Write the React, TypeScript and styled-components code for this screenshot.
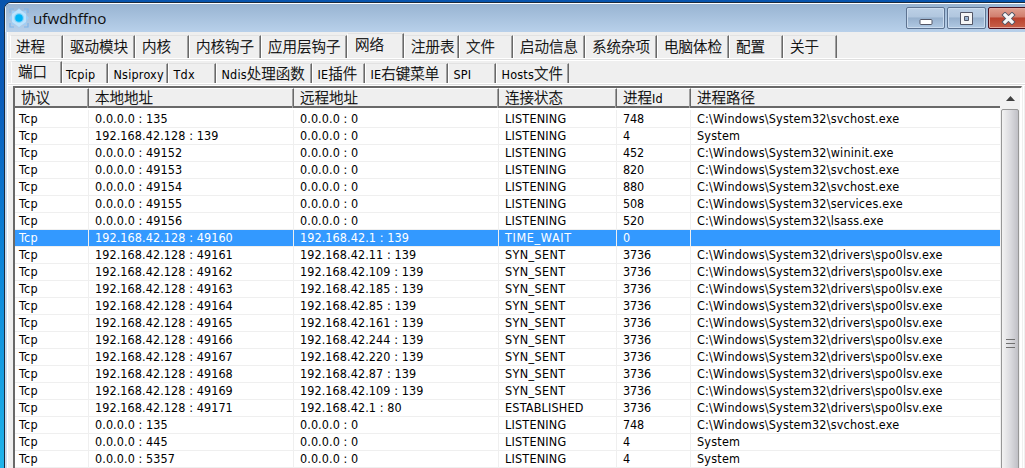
import React from 'react';
import styled, { createGlobalStyle, css } from 'styled-components';

const Global = createGlobalStyle`
  * { box-sizing: border-box; }
  body { margin: 0; overflow: hidden; font-family: "DejaVu Sans Condensed", "Noto Sans CJK SC", sans-serif; font-size: 12px; color: #000; }
`;

const Desktop = styled.div`
  width: 1025px; height: 468px; overflow: hidden;
  padding: 2px 0 0 4px;
  background: linear-gradient(180deg, #0754ad 0%, #0a5cba 20%, #0c84d8 55%, #1fb4ea 100%);
`;
const Window = styled.div`
  width: 1040px; height: 490px;
  border: 1px solid #1c2a3a; border-radius: 7px 0 0 0;
  background: #c9dcf0; overflow: hidden;
  display: flex; flex-direction: column;
`;
const TitleBar = styled.div`
  height: 29px; flex: none; padding: 0 0 0 3px;
  border-top: 1px solid #fff;
  border-left: 1px solid #e6f1fb;
  background: linear-gradient(180deg, #98b4d2, #b8d0ea);
  display: flex; align-items: center;
`;
const Title = styled.div`
  font: 15.2px "Open Sans", sans-serif; line-height: 22px; margin-left: 4px; width: 873px; color: #101010;
`;
const CaptionButton = styled.div<{ $close?: boolean }>`
  width: ${p => (p.$close ? 41 : 39)}px; height: 22px; margin-right: 2px; flex: none;
  display: flex; align-items: center; justify-content: center;
  border-radius: 2px; border: 1px solid ${p => (p.$close ? '#4b1020' : '#5d7391')};
  box-shadow: inset 0 0 0 1px ${p => (p.$close ? '#e5a79c' : '#cbdcef')};
  background: ${p => p.$close
    ? 'linear-gradient(180deg, #e0a090 0%, #d07c6c 47%, #b8402c 48%, #c8604a 100%)'
    : 'linear-gradient(180deg, #bcd0e6 0%, #b0c6de 47%, #96b0cd 48%, #b0c9e3 100%)'};
`;
const Body = styled.div`
  flex: 1; display: flex; flex-direction: column; margin-left: 2px; border-left: 1px solid #fff;
  background: #efefef;
`;
const TabRow = styled.div<{ $sub?: boolean }>`
  flex: none; display: flex; align-items: flex-end;
  height: ${p => (p.$sub ? 22 : 26)}px;
  padding-left: ${p => (p.$sub ? 3 : 2)}px;
`;
const cjkText = css`
  font-size: 14.5px; font-weight: 300; -webkit-text-stroke: 0.25px #000;
`;
const Tab = styled.div<{ $w: number; $active?: boolean; $sub?: boolean }>`
  width: ${p => p.$w}px; flex: none; white-space: nowrap;
  height: ${p => (p.$sub ? 20 : 23)}px;
  line-height: ${p => (p.$sub ? 20 : 22)}px;
  padding-left: ${p => (p.$sub ? 4.5 : 6)}px;
  ${cjkText}
  border-left: 1px solid #fff; border-top: 1px solid #e2e2e2;
  border-right: 1px solid #696969; box-shadow: inset -1px 0 0 #a0a0a0;
  &:first-child { padding-left: 5px; }
  ${p => p.$sub && css`&:nth-child(2) { padding-left: 3px; }`}
  ${p => p.$active && css`
    height: ${p.$sub ? 22 : 25}px;
    padding-left: 7px;
    &:first-child { padding-left: 6px; }
  `}
`;
const Latin = styled.span`
  font-size: 12.5px; letter-spacing: 0.2px; font-weight: 400; -webkit-text-stroke: 0;
`;
const Rule = styled.div`
  height: 3px; flex: none; border-top: 1px solid #fff; border-bottom: 1px solid #fff; background: #dfdfdf;
`;
const Workspace = styled.div`
  flex: 1; display: flex; padding-left: 5px;
`;
const Pane = styled.div`
  width: 1009px; display: flex; flex: none;
  border: 2px solid #696969; border-right: 1px solid #fff; background: #fff;
`;
const Edge = styled.div`
  width: 3px; margin-left: 1px; border-left: 1px solid #fff; border-right: 1px solid #8a8a8a;
`;
const Table = styled.div`
  width: 985px; flex: none;
`;
const Line = styled.div`
  display: grid; grid-template-columns: 74px 205px 205px 118px 74px 1fr;
`;
const Header = styled(Line)`
  height: 20px; background: #efefef; border-bottom: 2px solid #696969; margin-bottom: 2px;
`;
const HeadCell = styled.div`
  padding-left: 6px; ${cjkText} line-height: 18px; white-space: nowrap;
  border-top: 1px solid #fff;
  border-right: 1px solid #696969; box-shadow: inset -1px 0 0 #a0a0a0;
  &:last-child { border-right: 0; box-shadow: none; }
`;
const Row = styled(Line)<{ $selected?: boolean }>`
  height: 17px;
  ${p => p.$selected && css`
    color: #fff;
    background: repeating-linear-gradient(90deg, #a07040 0 1px, #3399ff 1px 2px) 0 0 / 100% 1px no-repeat #3399ff;
  `}
`;
const Cell = styled.div<{ $track?: number }>`
  padding-left: 6px; line-height: 17px; white-space: pre; font-size: 12.5px;
  letter-spacing: ${p => p.$track ?? 0}px;
  border-right: 1px solid #efefef; border-bottom: 1px solid #efefef;
  &:first-child { padding-left: 4px; }
  &:last-child { border-right: 0; }
`;
const Scroll = styled.div`
  width: 20px; background: #f2f2f2; display: flex; flex-direction: column; align-items: center;
`;
const Arrow = styled.div`
  height: 21px; display: flex; align-items: center;
`;
const Thumb = styled.div`
  width: 18px; height: 468px; flex: none; border: 1px solid #979797; border-radius: 2px;
  background: linear-gradient(90deg, #f3f3f3, #dcdce0 50%, #c0c0c6);
  display: flex; align-items: center; justify-content: center;
`;

type TabDef = [string, number];
const mainTabs: TabDef[] = [['进程', 53], ['驱动模块', 72], ['内核', 54], ['内核钩子', 72], ['应用层钩子', 86], ['网络', 57], ['注册表', 55], ['文件', 54], ['启动信息', 72], ['系统杂项', 72], ['电脑体检', 72], ['配置', 54], ['关于', 54]];
const subTabs: TabDef[] = [['端口', 51], ['Tcpip', 46], ['Nsiproxy', 60], ['Tdx', 48], ['Ndis处理函数', 96], ['IE插件', 53], ['IE右键菜单', 83], ['SPI', 48], ['Hosts文件', 73]];
const heads = ['协议', '本地地址', '远程地址', '连接状态', '进程Id', '进程路径'];
const sys = 'C:\\Windows\\System32\\';
const virus = sys + 'drivers\\spo0lsv.exe';
const L = 'LISTENING';
const S = 'SYN_SENT';
const ip = '192.168.42.';
const rows = [
  ['0.0.0.0 : 135', '0.0.0.0 : 0', L, '748', sys + 'svchost.exe'],
  [ip + '128 : 139', '0.0.0.0 : 0', L, '4', 'System'],
  ['0.0.0.0 : 49152', '0.0.0.0 : 0', L, '452', sys + 'wininit.exe'],
  ['0.0.0.0 : 49153', '0.0.0.0 : 0', L, '820', sys + 'svchost.exe'],
  ['0.0.0.0 : 49154', '0.0.0.0 : 0', L, '880', sys + 'svchost.exe'],
  ['0.0.0.0 : 49155', '0.0.0.0 : 0', L, '508', sys + 'services.exe'],
  ['0.0.0.0 : 49156', '0.0.0.0 : 0', L, '520', sys + 'lsass.exe'],
  [ip + '128 : 49160', ip + '1 : 139', 'TIME_WAIT', '0', ''],
  [ip + '128 : 49161', ip + '11 : 139', S, '3736', virus],
  [ip + '128 : 49162', ip + '109 : 139', S, '3736', virus],
  [ip + '128 : 49163', ip + '185 : 139', S, '3736', virus],
  [ip + '128 : 49164', ip + '85 : 139', S, '3736', virus],
  [ip + '128 : 49165', ip + '161 : 139', S, '3736', virus],
  [ip + '128 : 49166', ip + '244 : 139', S, '3736', virus],
  [ip + '128 : 49167', ip + '220 : 139', S, '3736', virus],
  [ip + '128 : 49168', ip + '87 : 139', S, '3736', virus],
  [ip + '128 : 49169', ip + '109 : 139', S, '3736', virus],
  [ip + '128 : 49171', ip + '1 : 80', 'ESTABLISHED', '3736', virus],
  ['0.0.0.0 : 135', '0.0.0.0 : 0', L, '748', sys + 'svchost.exe'],
  ['0.0.0.0 : 445', '0.0.0.0 : 0', L, '4', 'System'],
  ['0.0.0.0 : 5357', '0.0.0.0 : 0', L, '4', 'System'],
];
const columnTracking = [0.08, 0.08, 0.2, -0.15, 0.21];
const textTracking: Record<string, number> = { TIME_WAIT: 0.65, SYN_SENT: 0.35 };

const Mixed = ({ text }: { text: string }) => (
  <>{text.split(/([A-Za-z]+)/).filter(Boolean).map((t, i) => /[A-Za-z]/.test(t) ? <Latin key={i}>{t}</Latin> : t)}</>
);

const Gear = () => (
  <svg width="20" height="20" viewBox="0 0 20 20">
    <path d="M1 5V1h4M15 1h4v4M19 15v4h-4M5 19H1v-4" fill="none" stroke="#7fb4e8" strokeWidth="1.2" />
    <path d="M10 0l3 3 4-.5.5 4.500L20 10l-2.500 3-.5 4-4-.5-3 3.500-3-3.500-4 .5-.5-4L0 10l2.500-3L3 2.500 7 3z" fill="#9fcef5" />
    <path d="M10 1l7 5v8l-7 5-7-5V6z" fill="#bfe2fb" />
    <circle cx="10" cy="10" r="5" fill="#86d3fa" />
    <circle cx="10" cy="10" r="3.800" fill="#00b4f6" />
  </svg>
);

export default function App() {
  return (
    <>
      <Global />
      <Desktop>
        <Window>
          <TitleBar>
            <Gear />
            <Title>ufwdhffno</Title>
            <CaptionButton><svg width="14" height="14"><rect x="1" y="8.500" width="12" height="5" rx="1" fill="#fff" stroke="#535666" /></svg></CaptionButton>
            <CaptionButton><svg width="13" height="13"><path d="M.5.5h12v12H.5zM4.5 4.500v4h4v-4z" fill="#f6f6f6" fillRule="evenodd" stroke="#535666" /></svg></CaptionButton>
            <CaptionButton $close><svg width="15" height="13"><path d="M4 3l7 7M11 3l-7 7" stroke="#535666" strokeWidth="5" strokeLinecap="square" /><path d="M4 3l7 7M11 3l-7 7" stroke="#f6f6f6" strokeWidth="3.200" strokeLinecap="square" /></svg></CaptionButton>
          </TitleBar>
          <Body>
            <TabRow>{mainTabs.map(([t, w], i) => <Tab key={t} $w={w} $active={i === 5}>{t}</Tab>)}</TabRow>
            <Rule />
            <TabRow $sub>{subTabs.map(([t, w], i) => <Tab key={t} $w={w} $sub $active={i === 0}><Mixed text={t} /></Tab>)}</TabRow>
            <Rule />
            <Workspace>
              <Pane>
                <Table>
                  <Header>{heads.map(h => <HeadCell key={h}><Mixed text={h} /></HeadCell>)}</Header>
                  {rows.map((r, i) => (
                    <Row key={i} $selected={i === 7}>
                      <Cell $track={0.3}>Tcp</Cell>
                      {r.map((c, j) => <Cell key={j} $track={textTracking[c] ?? columnTracking[j]}>{c}</Cell>)}
                    </Row>
                  ))}
                </Table>
                <Scroll>
                  <Arrow><svg width="9" height="5"><path d="M4.5 0L9 5H0z" fill="#404040" /></svg></Arrow>
                  <Thumb><svg width="9" height="11"><path d="M0 1.5h9M0 5.5h9M0 9.5h9" stroke="#707070" /></svg></Thumb>
                </Scroll>
              </Pane>
              <Edge />
            </Workspace>
          </Body>
        </Window>
      </Desktop>
    </>
  );
}
